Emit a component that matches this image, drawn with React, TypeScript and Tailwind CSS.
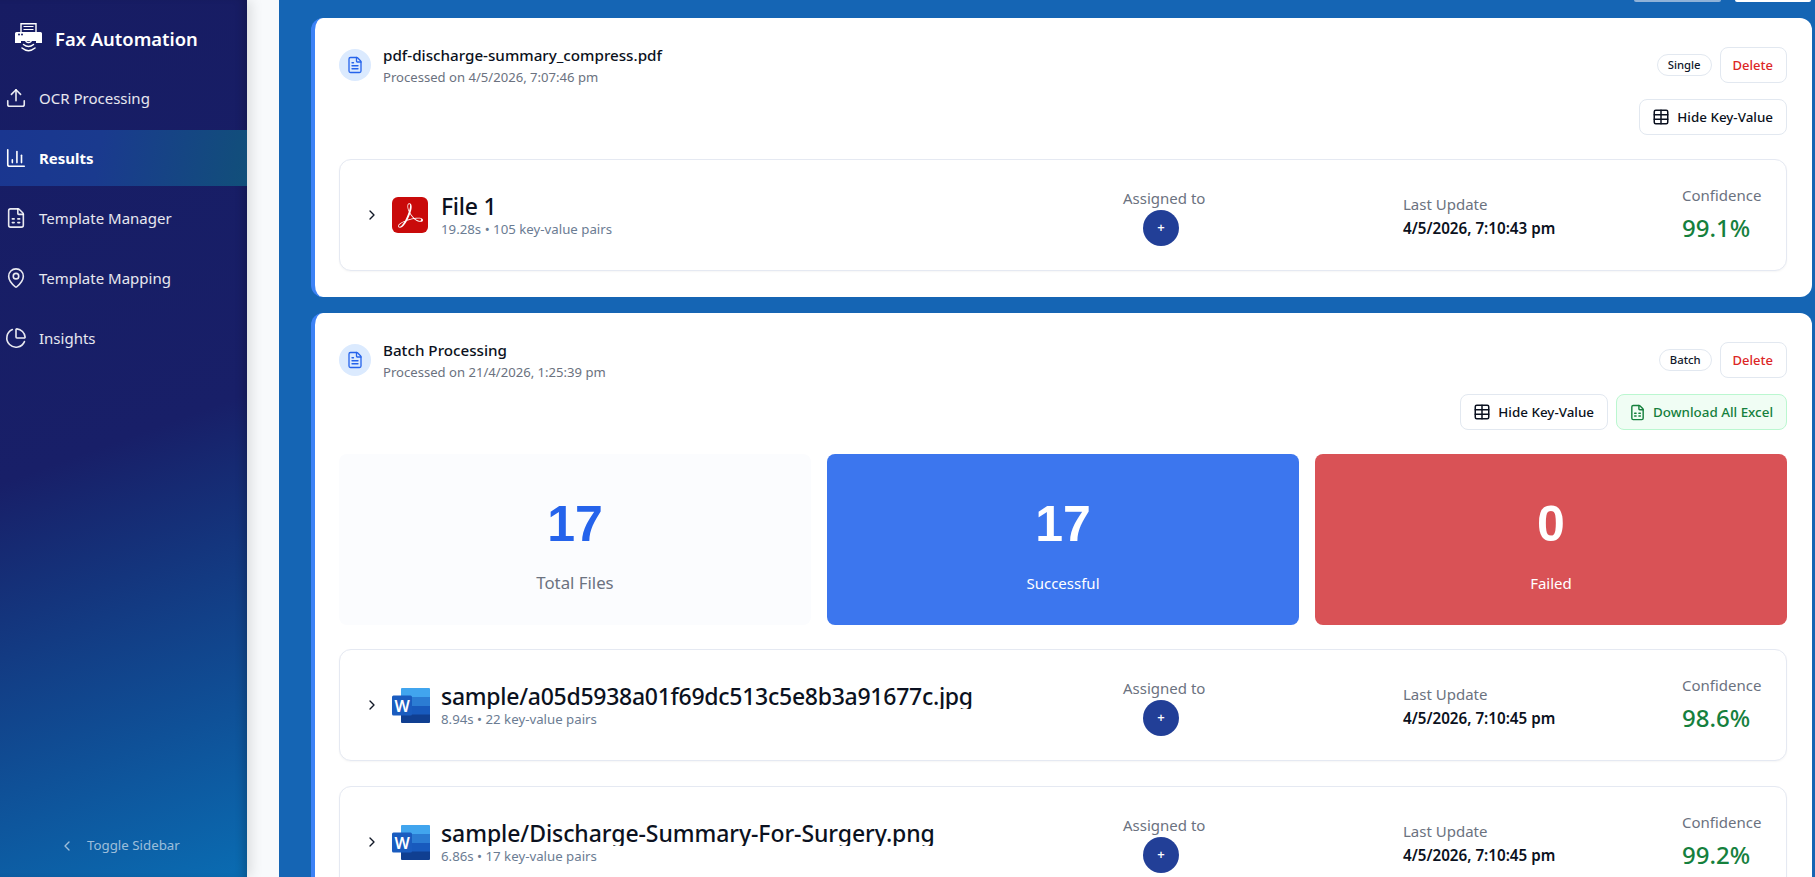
import { BarChart3, ChevronLeft, ChevronRight, FileSpreadsheet, FileText, MapPin, PieChart, Table, Upload } from "lucide-react";
import { SiAdobeacrobatreader } from "react-icons/si";
import type { ReactNode } from "react";

const NAV_ITEMS = [
  { label: "OCR Processing", icon: Upload },
  { label: "Results", icon: BarChart3, active: true },
  { label: "Template Manager", icon: FileSpreadsheet },
  { label: "Template Mapping", icon: MapPin },
  { label: "Insights", icon: PieChart },
];

const FaxLogo = () => (
  <svg viewBox="0 0 27 29" className="w-[27px] h-[29px] shrink-0 -mt-1" fill="none">
    <path d="M6 .7h15v9H6z" stroke="#fff" strokeWidth="1.400" />
    <path d="M8.500 3.500h10M8.500 6.500h10" stroke="#fff" strokeWidth="1.200" />
    <path d="M1.500 9h24a1.500 1.500 0 0 1 1.500 1.500V20H21v-2H6v2H0v-9.500A1.500 1.500 0 0 1 1.500 9z" fill="#fff" />
    <circle cx="4" cy="11.500" r="1" fill="#1a2068" />
    <circle cx="7" cy="11.500" r="1" fill="#1a2068" />
    <path d="M11 18.500c1.500 1.300 3.500 1.300 5 0" stroke="#fff" strokeWidth="1.500" strokeLinecap="round" />
    <path d="M8.500 21.500c3 2.400 7 2.400 10 0" stroke="#fff" strokeWidth="1.500" strokeLinecap="round" />
    <path d="M7 25c4 3.300 9 3.300 13 0" stroke="#fff" strokeWidth="1.500" strokeLinecap="round" />
  </svg>
);

const PdfIcon = () => (
  <div className="w-[38px] flex justify-start shrink-0">
    <div className="w-9 h-9 rounded-md bg-[#c90a0a] flex items-center justify-center">
      <SiAdobeacrobatreader className="w-[25px] h-[25px] text-white" />
    </div>
  </div>
);

const WordIcon = () => (
  <svg viewBox="0 0 38 35" className="w-[38px] h-[35px] shrink-0">
    <path d="M9 1a1 1 0 0 1 1-1h27a1 1 0 0 1 1 1v8.500H9z" fill="#41a5ee" />
    <path d="M9 9h29v9H9z" fill="#2b7cd3" />
    <path d="M9 18h29v9H9z" fill="#185abd" />
    <path d="M9 26.500h29V34a1 1 0 0 1-1 1H10a1 1 0 0 1-1-1z" fill="#103f91" />
    <rect x="0" y="7.500" width="20" height="20" rx="1.500" fill="#1a5cbf" />
    <text x="10" y="23.500" textAnchor="middle" fontSize="16" fontWeight="600" fill="#fff" fontFamily="Noto Sans, sans-serif">W</text>
  </svg>
);

const Sidebar = () => (
  <aside className="w-[247px] shrink-0 flex flex-col h-full bg-[linear-gradient(160deg,#171c63_0%,#181f68_50%,#0a6cb2_100%)] shadow-[4px_0_12px_rgba(0,0,0,0.12),inset_-8px_0_10px_-5px_rgba(0,0,0,0.22)] z-10">
    <div className="h-[70px] pt-2 flex items-center gap-[13px] pl-[15px] pr-2">
      <FaxLogo />
      <span className="text-[18.4px] font-semibold text-white whitespace-nowrap">Fax Automation</span>
    </div>
    <nav className="flex flex-col gap-1">
      {NAV_ITEMS.map(item => {
        const Icon = item.icon;
        return (
          <div
            key={item.label}
            className={`h-14 flex items-center gap-3 pl-[5px] text-[15px] ${item.active ? "font-bold text-white bg-[linear-gradient(100deg,#1a3690_0%,#1a3a8e_40%,#114f7a_100%)]" : "text-white/90"}`}
          >
            <Icon className="w-[22px] h-[22px] shrink-0" strokeWidth={1.750} />
            {item.label}
          </div>
        );
      })}
    </nav>
    <div className="mt-auto h-[48px] mb-[7px] flex items-center gap-3 text-[13.300px] text-white/60 pl-[59px]">
      <ChevronLeft className="w-4 h-4" />
      Toggle Sidebar
    </div>
  </aside>
);

const OutlineButton = ({ children, className = "" }: { children: ReactNode; className?: string }) => (
  <button className={`h-9 pl-3 pr-[13px] rounded-lg border flex items-center gap-[7px] font-medium whitespace-nowrap ${className}`}>
    {children}
  </button>
);

const Badge = ({ label }: { label: string }) => (
  <span className="h-[22px] px-[10px] rounded-full border border-[#e2e8f0] flex items-center text-[11.300px] font-medium text-[#0f172a]">
    {label}
  </span>
);

const RowLabel = ({ children }: { children: ReactNode }) => (
  <div className="text-[15px] leading-5 text-[#6b7280] whitespace-nowrap">{children}</div>
);

interface FileRowProps {
  icon: ReactNode;
  title: string;
  titleClass?: string;
  meta: string;
  updated: string;
  confidence: string;
}

const FileRow = ({ icon, title, titleClass = "tracking-[-0.27px]", meta, updated, confidence }: FileRowProps) => (
  <div className="h-[112px] rounded-xl border border-[#e5e9f2] bg-white shadow-[0_1px_2px_rgba(0,0,0,0.04)] px-6 grid grid-cols-[759px_280px_279px_1fr] items-center">
    <div className="flex items-center gap-3 min-w-0">
      <ChevronRight className="w-4 h-4 shrink-0 text-[#111827]" />
      {icon}
      <div className="min-w-0 -ml-px">
        <div className={`text-[23px] leading-[27px] h-[28px] pt-[2px] overflow-hidden font-medium text-[#0b1120] whitespace-nowrap ${titleClass}`}>{title}</div>
        <div className="text-[13.250px] leading-5 text-[#6b7c93] whitespace-nowrap">{meta}</div>
      </div>
    </div>
    <div className="flex flex-col items-start pt-[4px]">
      <RowLabel>Assigned to</RowLabel>
      <div className="ml-5 mt-[2px] w-9 h-9 rounded-full bg-[#223f97] text-white text-[13px] font-semibold flex items-center justify-center">+</div>
    </div>
    <div className="pt-[6px]">
      <RowLabel>Last Update</RowLabel>
      <div className="text-[15.200px] leading-[28px] font-semibold text-[#0b1120] whitespace-nowrap">{updated}</div>
    </div>
    <div className="pt-[6px]">
      <RowLabel>Confidence</RowLabel>
      <div className="text-[24px] leading-[46px] font-medium text-[#15803d]">{confidence}</div>
    </div>
  </div>
);

const ResultHeader = ({ title, sub, badge, children }: { title: string; sub: string; badge: string; children: ReactNode }) => (
  <div className="flex justify-between items-start">
    <div className="flex items-center gap-3 h-9">
      <div className="w-8 h-8 rounded-full bg-[#dbeafe] flex items-center justify-center">
        <FileText className="w-[18px] h-[18px] text-[#2563eb]" strokeWidth={1.750} />
      </div>
      <div className="pt-[2px]">
        <div className="text-[15.200px] leading-[22px] font-medium text-[#0b1120]">{title}</div>
        <div className="text-[13.100px] leading-[22px] text-[#6b7280]">{sub}</div>
      </div>
    </div>
    <div className="flex flex-col items-end gap-4">
      <div className="flex items-center gap-2">
        <Badge label={badge} />
        <OutlineButton className="border-[#e2e8f0] text-[#dc2626] text-[13px] pt-px">Delete</OutlineButton>
      </div>
      <div className="flex gap-2">{children}</div>
    </div>
  </div>
);

const HideKeyValue = () => (
  <OutlineButton className="border-[#e2e8f0] text-[#0b1120] text-[13.400px]">
    <Table className="w-[18px] h-[18px]" />
    Hide Key-Value
  </OutlineButton>
);

const StatCard = ({ value, label, className, valueClass, labelClass }: { value: string; label: string; className: string; valueClass: string; labelClass: string }) => (
  <div className={`h-[171px] rounded-lg flex flex-col items-center ${className}`}>
    <div className={`mt-[34px] text-[50px] leading-[72px] font-bold font-['Liberation_Sans',sans-serif] ${valueClass}`}>{value}</div>
    <div className={`mt-[11px] leading-6 ${labelClass}`}>{label}</div>
  </div>
);

export default function App() {
  return (
    <div className="w-[1815px] h-[877px] overflow-hidden flex font-['Noto_Sans',sans-serif] bg-[#f8fafc]">
      <Sidebar />
      <div className="w-[32px] shrink-0" />
      <main className="flex-1 bg-[#1565b4] pl-8 pr-[3px] overflow-hidden flex flex-col gap-4">
        {/* bottom edge of the toolbar scrolled out of view */}
        <div className="h-[2px] shrink-0 flex justify-end gap-[14px] pr-px">
          <div className="w-[87px] rounded-b bg-[#8fb2d8]" />
          <div className="w-[76px] rounded-b bg-white" />
        </div>
        <section className="h-[279px] shrink-0 bg-white rounded-xl border-l-4 border-[#3b82f6] pl-6 pr-[25px] pt-[29px]">
          <ResultHeader title="pdf-discharge-summary_compress.pdf" sub="Processed on 4/5/2026, 7:07:46 pm" badge="Single">
            <HideKeyValue />
          </ResultHeader>
          <div className="mt-6">
            <FileRow icon={<PdfIcon />} title="File 1" meta="19.28s • 105 key-value pairs" updated="4/5/2026, 7:10:43 pm" confidence="99.1%" />
          </div>
        </section>
        <section className="shrink-0 bg-white rounded-t-xl border-l-4 border-[#3b82f6] pl-6 pr-[25px] pt-[29px]">
          <ResultHeader title="Batch Processing" sub="Processed on 21/4/2026, 1:25:39 pm" badge="Batch">
            <HideKeyValue />
            <OutlineButton className="border-[#bbf7d0] bg-[#f0fdf4] text-[#15803d] text-[13.400px]">
              <FileSpreadsheet className="w-[17px] h-[17px]" />
              Download All Excel
            </OutlineButton>
          </ResultHeader>
          <div className="mt-[24px] grid grid-cols-3 gap-4">
            <StatCard value="17" label="Total Files" className="bg-[#fbfcfe] text-[#6b7280]" valueClass="text-[#2563eb]" labelClass="text-[16.800px]" />
            <StatCard value="17" label="Successful" className="bg-[#3c76ee] text-white" valueClass="text-white" labelClass="text-[15px]" />
            <StatCard value="0" label="Failed" className="bg-[#d95256] text-white" valueClass="text-white" labelClass="text-[15px]" />
          </div>
          <div className="mt-6 flex flex-col gap-[25px]">
            <FileRow icon={<WordIcon />} title="sample/a05d5938a01f69dc513c5e8b3a91677c.jpg" meta="8.94s • 22 key-value pairs" updated="4/5/2026, 7:10:45 pm" confidence="98.6%" />
            <FileRow icon={<WordIcon />} title="sample/Discharge-Summary-For-Surgery.png" titleClass="tracking-[-0.07px]" meta="6.86s • 17 key-value pairs" updated="4/5/2026, 7:10:45 pm" confidence="99.2%" />
          </div>
        </section>
      </main>
    </div>
  );
}
